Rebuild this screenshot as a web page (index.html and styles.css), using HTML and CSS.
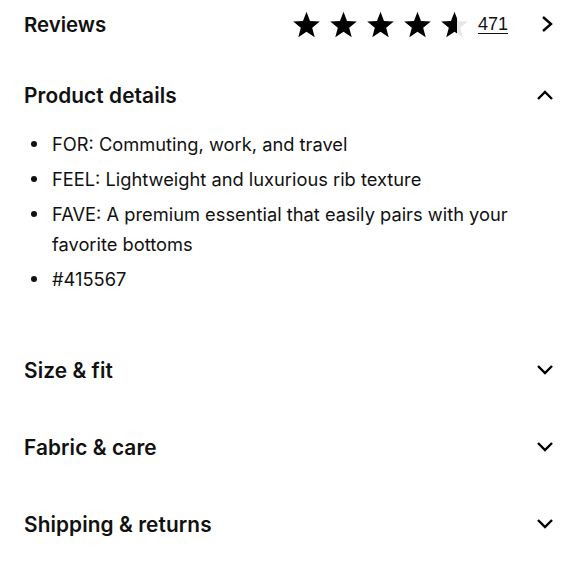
FILE: index.html
```html
<!DOCTYPE html>
<html lang="en">
<head>
<meta charset="utf-8">
<link rel="stylesheet" href="styles.css">
</head>
<body>
<div class="page">
  <div class="row reviews">
    <h2 class="title">Reviews</h2>
    <div class="rating">
      <div class="stars">
        <svg class="star" viewBox="0 0 24 24"><path d="M12 1.5l2.9 7.6 8.1.4-6.3 5.1 2.1 7.9L12 18l-6.8 4.5 2.1-7.9L1 9.5l8.1-.4z" fill="#000"/></svg>
        <svg class="star" viewBox="0 0 24 24"><path d="M12 1.5l2.9 7.6 8.1.4-6.3 5.1 2.1 7.9L12 18l-6.8 4.5 2.1-7.9L1 9.5l8.1-.4z" fill="#000"/></svg>
        <svg class="star" viewBox="0 0 24 24"><path d="M12 1.5l2.9 7.6 8.1.4-6.3 5.1 2.1 7.9L12 18l-6.8 4.5 2.1-7.9L1 9.5l8.1-.4z" fill="#000"/></svg>
        <svg class="star" viewBox="0 0 24 24"><path d="M12 1.5l2.9 7.6 8.1.4-6.3 5.1 2.1 7.9L12 18l-6.8 4.5 2.1-7.9L1 9.5l8.1-.4z" fill="#000"/></svg>
        <svg class="star" viewBox="0 0 24 24"><defs><linearGradient id="half" x1="0" x2="1" y1="0" y2="0"><stop offset="0.58" stop-color="#000"/><stop offset="0.58" stop-color="#e6e6e6"/></linearGradient></defs><path d="M12 1.5l2.9 7.6 8.1.4-6.3 5.1 2.1 7.9L12 18l-6.8 4.5 2.1-7.9L1 9.5l8.1-.4z" fill="url(#half)"/></svg>
      </div>
      <a class="count" href="#">471</a>
      <svg class="chev-right" viewBox="0 0 14 18"><path d="M3 2l8 7-8 7" fill="none" stroke="#000" stroke-width="2.4"/></svg>
    </div>
  </div>

  <div class="row section open">
    <h2 class="title">Product details</h2>
    <svg class="chev" viewBox="0 0 18 12"><path d="M2 10l7-7 7 7" fill="none" stroke="#000" stroke-width="2.4"/></svg>
  </div>
  <ul class="details">
    <li>FOR: Commuting, work, and travel</li>
    <li>FEEL: Lightweight and luxurious rib texture</li>
    <li>FAVE: A premium essential that easily pairs with your favorite bottoms</li>
    <li>#415567</li>
  </ul>

  <div class="row section first">
    <h2 class="title">Size &amp; fit</h2>
    <svg class="chev" viewBox="0 0 18 12"><path d="M2 2l7 7 7-7" fill="none" stroke="#000" stroke-width="2.4"/></svg>
  </div>
  <div class="row section">
    <h2 class="title">Fabric &amp; care</h2>
    <svg class="chev" viewBox="0 0 18 12"><path d="M2 2l7 7 7-7" fill="none" stroke="#000" stroke-width="2.4"/></svg>
  </div>
  <div class="row section">
    <h2 class="title">Shipping &amp; returns</h2>
    <svg class="chev" viewBox="0 0 18 12"><path d="M2 2l7 7 7-7" fill="none" stroke="#000" stroke-width="2.4"/></svg>
  </div>
</div>
</body>
</html>
```

FILE: styles.css
```css
* { box-sizing: border-box; }
html, body { margin: 0; padding: 0; background: #fff; }
body {
  font-family: Inter, "Open Sans", "Liberation Sans", sans-serif;
  color: #111;
  width: 580px;
}
.page { padding: 0 26px 0 24px; }
.row {
  display: flex;
  align-items: center;
  justify-content: space-between;
  height: 48px;
}
.title {
  margin: 0;
  font-size: 20.8px;
  font-weight: 600;
  letter-spacing: 0.1px;
  color: #111;
}
.reviews .title { font-size: 20.4px; letter-spacing: 0; }
.rating {
  display: flex;
  align-items: center;
}
.stars {
  display: flex;
  gap: 8px;
}
.star {
  width: 29px;
  height: 29px;
  display: block;
}
.count {
  font-family: "Liberation Sans", Arial, sans-serif;
  font-size: 18px;
  color: #111;
  text-decoration: underline;
  text-underline-offset: 3px;
  margin-left: 9px;
}
.chev-right {
  width: 14px;
  height: 18px;
  margin-left: 32px;
  display: block;
}
.section { margin-top: 23px; }
.section.first { margin-top: 52px; }
.section + .section { margin-top: 29px; }
.chev {
  width: 18px;
  height: 12px;
  display: block;
  margin-right: 0;
}
.details {
  list-style: none;
  margin: 10px 0 0;
  padding: 0;
  display: flex;
  flex-direction: column;
  gap: 5px;
}
.details li {
  position: relative;
  padding-left: 28px;
  font-size: 18.3px;
  line-height: 30px;
  color: #111;
  padding-right: 40px;
}
.details li::before {
  content: "";
  position: absolute;
  left: 7px;
  top: 12px;
  width: 6px;
  height: 6px;
  border-radius: 50%;
  background: #111;
}
```
